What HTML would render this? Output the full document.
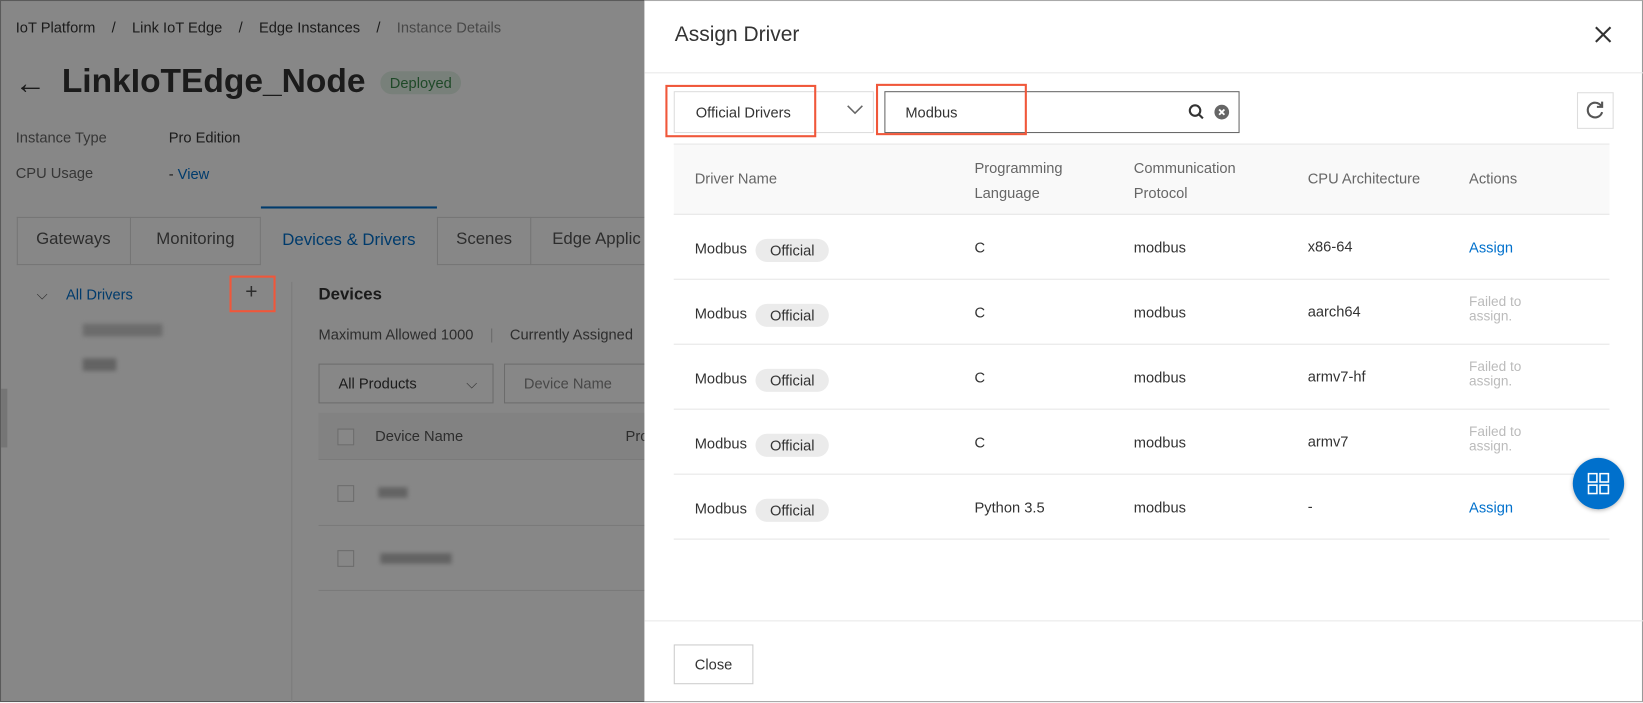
<!DOCTYPE html>
<html><head><meta charset="utf-8"><style>
*{box-sizing:border-box;margin:0;padding:0}
body{width:1643px;height:702px;overflow:hidden;font-family:"Liberation Sans",sans-serif;font-size:14px;color:#333;position:relative;background:#fff}
#w{position:absolute;left:0;top:0;width:1568px;height:670px;transform:scale(1.04783);transform-origin:0 0}
.abs{position:absolute;white-space:nowrap}
.page{position:absolute;left:0;top:0;width:1568px;height:670px;border:1px solid #aaa}
.ov{position:absolute;left:0;top:0;width:1568px;height:670px;background:rgba(0,0,0,.47)}
.modal{position:absolute;left:615px;top:0;width:953px;height:670px;background:#fff;border-right:1px solid #999;border-top:1px solid #aaa;border-bottom:1px solid #aaa}
.red{position:absolute;border:2px solid #f0573a}
.tag{display:inline-block;background:#ebebeb;border-radius:12px;padding:3px 14px;margin-left:8px;position:relative;top:2px}
.hr{position:absolute;left:28px;width:893px;height:1px;background:#e6e6e6}
.fail{color:#bbb;font-size:13px;line-height:14px}
.blue{color:#0070cc}
</style></head><body><div id="w">
<div class="page">
 <div class="abs" style="left:14px;top:17px;color:#333">IoT Platform &nbsp;&nbsp;&nbsp;/&nbsp;&nbsp;&nbsp; Link IoT Edge &nbsp;&nbsp;&nbsp;/&nbsp;&nbsp;&nbsp; Edge Instances &nbsp;&nbsp;&nbsp;/&nbsp;&nbsp;&nbsp; <span style="color:#888">Instance Details</span></div>
 <div class="abs" style="left:13px;top:62px;font-size:30px">←</div>
 <div class="abs" style="left:58px;top:58px;font-size:32px;font-weight:bold">LinkIoTEdge_Node</div>
 <div class="abs" style="left:362px;top:67px;background:#e3f1e6;color:#3b8a4d;border-radius:12px;padding:3px 9px;font-size:14px">Deployed</div>
 <div class="abs" style="left:14px;top:122px;color:#666">Instance Type</div>
 <div class="abs" style="left:160px;top:122px">Pro Edition</div>
 <div class="abs" style="left:14px;top:156px;color:#666">CPU Usage</div>
 <div class="abs" style="left:160px;top:157px">- <span class="blue">View</span></div>
 <div class="abs" style="left:15px;top:206px;width:600px;height:46px;border:1px solid #ddd;border-right:none"></div>
 <div class="abs" style="left:15px;top:206px;width:109px;height:46px;border-right:1px solid #ddd;text-align:center;line-height:44px;font-size:16px;color:#555">Gateways</div>
 <div class="abs" style="left:124px;top:206px;width:124px;height:46px;border-right:1px solid #ddd;text-align:center;line-height:44px;font-size:16px;color:#555">Monitoring</div>
 <div class="abs" style="left:248px;top:196px;width:168px;height:57px;border-top:2px solid #0070cc;background:#fff;text-align:center;line-height:46px;font-size:16px;color:#0070cc;padding-top:8px">Devices &amp; Drivers</div>
 <div class="abs" style="left:416px;top:206px;width:90px;height:46px;border-right:1px solid #ddd;border-left:1px solid #ddd;text-align:center;line-height:44px;font-size:16px;color:#555">Scenes</div>
 <div class="abs" style="left:526px;top:206px;line-height:44px;font-size:16px;color:#555">Edge Applic</div>
 <div class="abs" style="left:34px;top:272px;color:#555">⌵</div>
 <div class="abs" style="left:62px;top:272px"><span class="blue">All Drivers</span></div>
 <div class="abs" style="left:233px;top:267px;font-size:20px;color:#555">+</div>
 <div class="abs" style="left:78px;top:308px;width:76px;height:12px;background:#ccc;filter:blur(2px)"></div>
 <div class="abs" style="left:78px;top:341px;width:32px;height:12px;background:#bbb;filter:blur(2px)"></div>
 <div class="abs" style="left:277px;top:268px;width:1px;height:402px;background:#e8e8e8"></div>
 <div class="abs" style="left:303px;top:272px;font-size:16px;font-weight:bold">Devices</div>
 <div class="abs" style="left:303px;top:310px;color:#555">Maximum Allowed 1000 &nbsp;&nbsp;&nbsp;<span style="color:#ccc">|</span>&nbsp;&nbsp;&nbsp; Currently Assigned</div>
 <div class="abs" style="left:303px;top:346px;width:167px;height:38px;border:1px solid #ccc;line-height:36px;padding-left:18px">All Products<span style="position:absolute;left:140px;color:#666">⌵</span></div>
 <div class="abs" style="left:480px;top:346px;width:140px;height:38px;border:1px solid #ccc;line-height:36px;padding-left:18px;color:#888">Device Name</div>
 <div class="abs" style="left:303px;top:393px;width:320px;height:45px;background:#f5f5f5;border-bottom:1px solid #e6e6e6"></div>
 <div class="abs" style="left:321px;top:408px;width:16px;height:16px;border:1px solid #ccc;background:#fff"></div>
 <div class="abs" style="left:357px;top:407px;color:#555">Device Name</div>
 <div class="abs" style="left:596px;top:407px;color:#555">Pro</div>
 <div class="abs" style="left:321px;top:462px;width:16px;height:16px;border:1px solid #ccc"></div>
 <div class="abs" style="left:360px;top:464px;width:28px;height:10px;background:#bbb;filter:blur(2px)"></div>
 <div class="abs" style="left:303px;top:500px;width:320px;height:1px;background:#e6e6e6"></div>
 <div class="abs" style="left:321px;top:524px;width:16px;height:16px;border:1px solid #ccc"></div>
 <div class="abs" style="left:362px;top:527px;width:68px;height:10px;background:#bbb;filter:blur(2px)"></div>
 <div class="abs" style="left:303px;top:562px;width:320px;height:1px;background:#e6e6e6"></div>
 <div class="abs" style="left:0;top:370px;width:6px;height:56px;background:#ddd"></div>
</div>
<div class="ov"></div>
<div class="red" style="left:219px;top:263px;width:44px;height:35px"></div>

<div class="modal">
 <div class="abs" style="left:29px;top:21px;font-size:20px;color:#333">Assign Driver</div>
 <svg class="abs" style="left:906px;top:23px" width="18" height="18" viewBox="0 0 18 18"><path d="M2 2L16 16M16 2L2 16" stroke="#333" stroke-width="2"/></svg>
 <div class="abs" style="left:0;top:68px;width:953px;height:1px;background:#e8e8e8"></div>
 <div class="abs" style="left:28px;top:86px;width:191px;height:40px;border:1px solid #ddd;line-height:38px;padding-left:20px">Official Drivers</div>
 <svg class="abs" style="left:193px;top:99px" width="16" height="10" viewBox="0 0 16 10"><path d="M1 1L8 8L15 1" stroke="#666" stroke-width="1.5" fill="none"/></svg>
 <div class="abs" style="left:229px;top:86px;width:339px;height:40px;border:1px solid #666;line-height:38px;padding-left:19px">Modbus</div>
 <svg class="abs" style="left:518px;top:97px" width="18" height="18" viewBox="0 0 18 18"><circle cx="7.5" cy="7.5" r="5" stroke="#333" stroke-width="2" fill="none"/><path d="M11 11L15 15" stroke="#333" stroke-width="2"/></svg>
 <svg class="abs" style="left:543px;top:98px" width="16" height="16" viewBox="0 0 16 16"><circle cx="8" cy="8" r="7" fill="#666"/><path d="M5.5 5.5L10.5 10.5M10.5 5.5L5.5 10.5" stroke="#fff" stroke-width="1.8"/></svg>
 <div class="abs" style="left:890px;top:87px;width:35px;height:35px;border:1px solid #ddd"></div>
 <svg class="abs" style="left:897px;top:94px" width="21" height="21" viewBox="0 0 21 21"><path d="M16 6A7 7 0 1 0 17 12" stroke="#555" stroke-width="2" fill="none"/><path d="M17 2V7H12" stroke="#555" stroke-width="2" fill="none"/></svg>
 <div class="abs" style="left:28px;top:136px;width:893px;height:68px;background:#f9f9f9;border-top:1px solid #e6e6e6;border-bottom:1px solid #e6e6e6"></div>
 <div class="abs" style="left:48px;top:161px;color:#666">Driver Name</div>
 <div class="abs" style="left:315px;top:147px;color:#666;line-height:24px">Programming<br>Language</div>
 <div class="abs" style="left:467px;top:147px;color:#666;line-height:24px">Communication<br>Protocol</div>
 <div class="abs" style="left:633px;top:161px;color:#666">CPU Architecture</div>
 <div class="abs" style="left:787px;top:161px;color:#666">Actions</div>

 <div class="abs" style="left:48px;top:225px">Modbus<span class="tag">Official</span></div>
 <div class="abs" style="left:315px;top:227px">C</div><div class="abs" style="left:467px;top:227px">modbus</div><div class="abs" style="left:633px;top:226px">x86-64</div><div class="abs blue" style="left:787px;top:227px">Assign</div>
 <div class="hr" style="top:265px"></div>
 <div class="abs" style="left:48px;top:287px">Modbus<span class="tag">Official</span></div>
 <div class="abs" style="left:315px;top:289px">C</div><div class="abs" style="left:467px;top:289px">modbus</div><div class="abs" style="left:633px;top:288px">aarch64</div><div class="abs fail" style="left:787px;top:280px">Failed to<br>assign.</div>
 <div class="hr" style="top:327px"></div>
 <div class="abs" style="left:48px;top:349px">Modbus<span class="tag">Official</span></div>
 <div class="abs" style="left:315px;top:351px">C</div><div class="abs" style="left:467px;top:351px">modbus</div><div class="abs" style="left:633px;top:350px">armv7-hf</div><div class="abs fail" style="left:787px;top:342px">Failed to<br>assign.</div>
 <div class="hr" style="top:389px"></div>
 <div class="abs" style="left:48px;top:411px">Modbus<span class="tag">Official</span></div>
 <div class="abs" style="left:315px;top:413px">C</div><div class="abs" style="left:467px;top:413px">modbus</div><div class="abs" style="left:633px;top:412px">armv7</div><div class="abs fail" style="left:787px;top:404px">Failed to<br>assign.</div>
 <div class="hr" style="top:451px"></div>
 <div class="abs" style="left:48px;top:473px">Modbus<span class="tag">Official</span></div>
 <div class="abs" style="left:315px;top:475px">Python 3.5</div><div class="abs" style="left:467px;top:475px">modbus</div><div class="abs" style="left:633px;top:474px">-</div><div class="abs blue" style="left:787px;top:475px">Assign</div>
 <div class="hr" style="top:513px"></div>

 <div class="abs" style="left:0;top:591px;width:953px;height:1px;background:#e8e8e8"></div>
 <div class="abs" style="left:28px;top:614px;width:76px;height:38px;border:1px solid #ccc;line-height:36px;text-align:center">Close</div>
 <div class="abs" style="left:886px;top:436px;width:49px;height:49px;border-radius:50%;background:#0070cc;box-shadow:0 1px 4px rgba(0,0,0,.3)"></div>
 <svg class="abs" style="left:900px;top:450px" width="21" height="21" viewBox="0 0 21 21" fill="none" stroke="#fff" stroke-width="1.5"><rect x="1" y="1" width="8" height="8"/><rect x="12" y="1" width="8" height="8"/><rect x="1" y="12" width="8" height="8"/><rect x="12" y="12" width="8" height="8"/></svg>
</div>
<div class="red" style="left:635px;top:81px;width:144px;height:50px"></div>
<div class="red" style="left:836px;top:80px;width:144px;height:49px"></div>
</div></body></html>
